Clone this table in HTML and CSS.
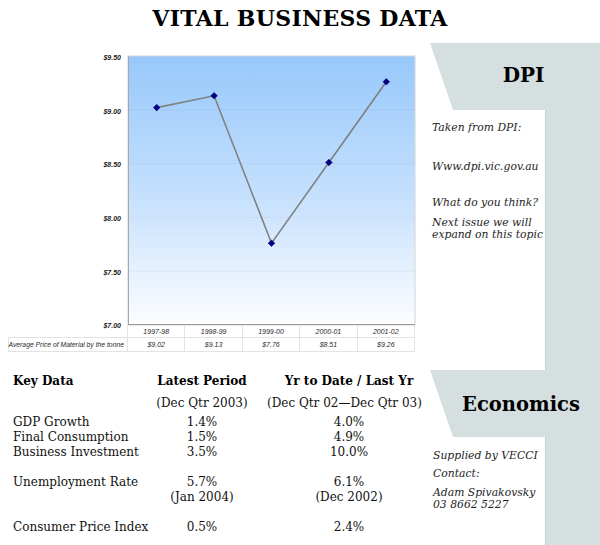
FILE: index.html
```
<!DOCTYPE html>
<html lang="en">
<head>
<meta charset="utf-8">
<title>Vital Business Data</title>
<link rel="stylesheet" href="styles.css">
</head>
<body>
<div class="page">
  <header class="masthead">
    <h1 class="title">VITAL BUSINESS DATA</h1>
  </header>
  <div class="content">
    <main class="main">
      <section class="chart">
        <svg class="chart-svg" width="430" height="282" viewBox="0 43 430 282" xmlns="http://www.w3.org/2000/svg">
          <defs>
            <linearGradient id="plotbg" x1="0" y1="0" x2="0" y2="1">
              <stop offset="0" stop-color="#97c8fb"/>
              <stop offset="0.5" stop-color="#c3dffd"/>
              <stop offset="1" stop-color="#fcfdff"/>
            </linearGradient>
          </defs>
          <rect x="128" y="56" width="287" height="269" fill="url(#plotbg)" stroke="#d4d4d4" stroke-width="1"/>
          <g stroke="#000" stroke-opacity="0.04" stroke-width="1">
            <line x1="128" y1="109.8" x2="415" y2="109.8"/>
            <line x1="128" y1="163.6" x2="415" y2="163.6"/>
            <line x1="128" y1="217.4" x2="415" y2="217.4"/>
            <line x1="128" y1="271.2" x2="415" y2="271.2"/>
          </g>
          <line x1="128.5" y1="56" x2="128.5" y2="325" stroke="#a8a8a8" stroke-width="1"/>
          <line x1="128" y1="324.5" x2="415" y2="324.5" stroke="#9a9a9a" stroke-width="1"/>
          <g class="axis-labels" text-anchor="end">
            <text x="121" y="59.8">$9.50</text>
            <text x="121" y="113.5">$9.00</text>
            <text x="121" y="167">$8.50</text>
            <text x="121" y="221">$8.00</text>
            <text x="121" y="274.5">$7.50</text>
            <text x="121" y="328">$7.00</text>
          </g>
          <polyline points="156.7,107.6 214.1,95.8 271.5,243.2 328.9,162.5 386.3,81.8" fill="none" stroke="#808080" stroke-width="1.6"/>
          <g fill="#00007f" stroke="#00007f" stroke-width="0.6" stroke-linejoin="round">
            <polygon points="156.7,104.3 160,107.6 156.7,110.9 153.4,107.6"/>
            <polygon points="214.1,92.5 217.4,95.8 214.1,99.1 210.8,95.8"/>
            <polygon points="271.5,239.9 274.8,243.2 271.5,246.5 268.2,243.2"/>
            <polygon points="328.9,159.2 332.2,162.5 328.9,165.8 325.6,162.5"/>
            <polygon points="386.3,78.5 389.6,81.8 386.3,85.1 383,81.8"/>
          </g>
        </svg>
        <div class="chart-table">
          <div class="cell cell-empty row1"></div>
          <div class="cell row1">1997-98</div>
          <div class="cell row1">1998-99</div>
          <div class="cell row1">1999-00</div>
          <div class="cell row1">2000-01</div>
          <div class="cell row1">2001-02</div>
          <div class="cell cell-label row2">Average Price of Material by the tonne</div>
          <div class="cell row2">$9.02</div>
          <div class="cell row2">$9.13</div>
          <div class="cell row2">$7.76</div>
          <div class="cell row2">$8.51</div>
          <div class="cell row2">$9.26</div>
        </div>
      </section>

      <section class="keydata">
        <div class="kd-head">Key Data</div>
        <div class="kd-head kd-center">Latest Period</div>
        <div class="kd-head kd-center">Yr to Date / Last Yr</div>

        <div class="kd-sub"></div>
        <div class="kd-sub kd-center">(Dec Qtr 2003)</div>
        <div class="kd-sub kd-left">(Dec Qtr 02—Dec Qtr 03)</div>

        <div>GDP Growth</div>
        <div class="kd-center">1.4%</div>
        <div class="kd-center">4.0%</div>

        <div>Final Consumption</div>
        <div class="kd-center">1.5%</div>
        <div class="kd-center">4.9%</div>

        <div>Business Investment</div>
        <div class="kd-center">3.5%</div>
        <div class="kd-center">10.0%</div>

        <div class="kd-gap"></div>

        <div>Unemployment Rate</div>
        <div class="kd-center">5.7%</div>
        <div class="kd-center">6.1%</div>

        <div></div>
        <div class="kd-center">(Jan 2004)</div>
        <div class="kd-center">(Dec 2002)</div>

        <div class="kd-gap"></div>

        <div>Consumer Price Index</div>
        <div class="kd-center">0.5%</div>
        <div class="kd-center">2.4%</div>
      </section>
    </main>

    <aside class="side">
      <div class="banner banner-dpi">
        <h2 class="banner-title">DPI</h2>
      </div>
      <div class="panel panel-dpi">
        <div class="panel-text">
          <p class="note note-a">Taken from DPI:</p>
          <p class="note note-b">Www.dpi.vic.gov.au</p>
          <p class="note note-c">What do you think?</p>
          <p class="note note-d">Next issue we will<br>expand on this topic</p>
        </div>
        <div class="panel-fill"></div>
      </div>
      <div class="banner banner-econ">
        <h2 class="banner-title banner-title-econ">Economics</h2>
      </div>
      <div class="panel panel-econ">
        <div class="panel-text panel-text-econ">
          <p class="note note-e">Supplied by VECCI</p>
          <p class="note note-f">Contact:</p>
          <p class="note note-g">Adam Spivakovsky<br>03 8662 5227</p>
        </div>
        <div class="panel-fill"></div>
      </div>
    </aside>
  </div>
</div>
</body>
</html>
```
FILE: styles.css
```
* { box-sizing: border-box; }

body {
  margin: 0;
  background: #ffffff;
  font-family: "DejaVu Serif", "Liberation Serif", serif;
  color: #000;
}

.page {
  width: 600px;
  height: 545px;
  display: flex;
  flex-direction: column;
  overflow: hidden;
}

.masthead {
  height: 43px;
  flex: none;
}

.title {
  margin: 0;
  padding-top: 5px;
  font-size: 22px;
  font-weight: bold;
  line-height: normal;
  letter-spacing: 0.3px;
  text-align: center;
  color: #000;
}

.content {
  flex: 1;
  min-height: 0;
  display: grid;
  grid-template-columns: 430px 170px;
}

.main {
  min-width: 0;
}

/* chart */
.chart-svg {
  display: block;
  overflow: visible;
}

.axis-labels {
  font-family: "Liberation Sans", Arial, sans-serif;
  font-size: 7px;
  font-weight: bold;
  font-style: italic;
  fill: #1a1a1a;
}

.chart-table {
  margin-left: 8px;
  width: 407px;
  display: grid;
  grid-template-columns: 120px repeat(5, 1fr);
  font-family: "Liberation Sans", Arial, sans-serif;
  font-style: italic;
  font-size: 7px;
  color: #2a2a2a;
}

.cell {
  display: flex;
  align-items: center;
  justify-content: center;
  border-right: 1px solid #e3e3e3;
  border-bottom: 1px solid #e3e3e3;
  white-space: nowrap;
}

.row1 { height: 13px; }
.row2 { height: 14px; }

.cell-label {
  border-left: 1px solid #e3e3e3;
  justify-content: flex-end;
  padding-right: 3px;
  font-size: 6.8px;
}

/* key data */
.keydata {
  margin-top: 22px;
  padding-left: 13px;
  display: grid;
  grid-template-columns: 130px 118px 176px;
  font-size: 12px;
  line-height: 15px;
  color: #111;
  white-space: nowrap;
}

.kd-head {
  font-weight: bold;
  margin-bottom: 7px;
  color: #000;
}

.kd-sub {
  margin-bottom: 4px;
}

.kd-center { text-align: center; }
.kd-left { text-align: left; padding-left: 6px; }

.kd-gap {
  grid-column: 1 / -1;
  height: 15px;
}

/* side column */
.side {
  display: flex;
  flex-direction: column;
  min-height: 0;
}

.banner {
  flex: none;
  height: 67px;
  background: #d6dfe0;
  clip-path: polygon(0 0, 100% 0, 100% 100%, 23px 100%);
  display: flex;
  align-items: center;
  justify-content: center;
  padding-left: 12px;
}

.banner-dpi { padding-left: 17px; padding-bottom: 3px; }
.banner-econ { padding-top: 2px; }

.banner-title {
  margin: 0;
  font-size: 20px;
  font-weight: bold;
  line-height: normal;
  color: #000;
}

.banner-title-econ { font-size: 19.5px; }

.panel {
  display: flex;
}

.panel-dpi {
  flex: none;
  height: 260px;
}

.panel-econ {
  flex: 1;
}

.panel-text {
  width: 116px;
  flex: none;
  padding-left: 2px;
  border-right: 1px solid #c7d0d1;
  font-style: italic;
  font-size: 10.8px;
  line-height: 12px;
  color: #1e1e1e;
}

.panel-text-econ { padding-left: 3px; }

.panel-fill {
  flex: 1;
  background: #d6dfe0;
}

.note {
  margin: 0;
  white-space: nowrap;
}

.note-a { margin-top: 12px; }
.note-b { margin-top: 27px; }
.note-c { margin-top: 24px; }
.note-d { margin-top: 8px; }
.note-e { margin-top: 13px; }
.note-f { margin-top: 6px; }
.note-g { margin-top: 7px; }
```
